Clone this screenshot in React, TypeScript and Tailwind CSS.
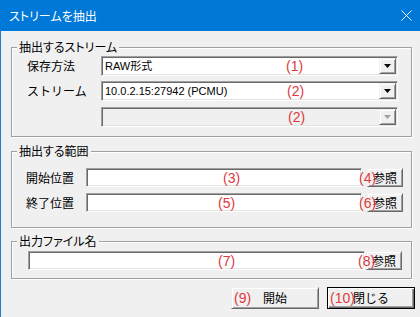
const jp = "font-['Noto_Sans_CJK_JP',sans-serif]";
const red = "absolute top-1/2 -translate-y-1/2 text-[14px] leading-none text-[#dc3a40] font-['Liberation_Sans','Noto_Sans_CJK_JP',sans-serif] whitespace-nowrap pointer-events-none";

const sunken =
  "border border-t-[#a0a0a0] border-l-[#a0a0a0] border-r-white border-b-white shadow-[inset_1px_1px_0_#696969,inset_-1px_-1px_0_#e3e3e3]";
const raised =
  "border border-t-[#f0f0f0] border-l-[#f0f0f0] border-r-[#696969] border-b-[#696969] shadow-[inset_1px_1px_0_#fff,inset_-1px_-1px_0_#a0a0a0] bg-[#f0f0f0]";

function Arrow({ disabled }: { disabled?: boolean }) {
  return (
    <div className={`w-[17px] h-full flex items-center justify-center ${raised}`}>
      <svg width="7" height="4" viewBox="0 0 7 4">
        <path d="M0 0h7L3.5 4z" fill={disabled ? "#a0a0a0" : "#000"} />
      </svg>
    </div>
  );
}

function Combo({ text, tag, tagLeft, disabled }: { text?: string; tag: string; tagLeft: string; disabled?: boolean }) {
  return (
    <div className={`relative flex-1 h-[20px] flex ${sunken} ${disabled ? "bg-[#f0f0f0]" : "bg-white"}`}>
      <div className="flex-1 flex items-center pl-[3px] pt-px text-[11px] text-black font-['Liberation_Sans','Noto_Sans_CJK_JP',sans-serif] whitespace-nowrap">
        {text}
      </div>
      <div className="p-px">
        <Arrow disabled={disabled} />
      </div>
      <span className={`${red} ${tagLeft}`}>{tag}</span>
    </div>
  );
}

function Field({ tag, tagLeft }: { tag: string; tagLeft: string }) {
  return (
    <div className={`relative flex-1 h-[19px] bg-white ${sunken}`}>
      <span className={`${red} ${tagLeft}`}>{tag}</span>
    </div>
  );
}

function RefButton({ tag }: { tag: string }) {
  return (
    <div className={`relative w-[36px] h-[19px] flex items-center justify-center text-[12px] text-black ${raised}`}>
      参照
      <span className={`${red} left-[-9px]`}>{tag}</span>
    </div>
  );
}

function Group({ label, className, children }: { label: string; className: string; children: React.ReactNode }) {
  return (
    <div className={`relative ml-[10px] w-[401px] border border-[#a0a0a0] shadow-[inset_1px_1px_0_#fff,1px_1px_0_#fff] ${className}`}>
      <span className="absolute -top-[10px] left-[5px] px-[2px] bg-[#f0f0f0] text-[12px] leading-[18px] text-black [font-feature-settings:'palt']">
        {label}
      </span>
      {children}
    </div>
  );
}

export default function App() {
  return (
    <div className={`w-[420px] h-[317px] overflow-hidden bg-[#f0f0f0] flex flex-col ${jp}`}>
      <div className="h-[31px] shrink-0 bg-[#0078d7] flex items-center justify-between pl-[9px] pr-[8px]">
        <span className="text-[12px] text-white [font-feature-settings:'palt']">ストリームを抽出</span>
        <svg width="11" height="11" viewBox="0 0 11 11">
          <path d="M0.5 0.5l10 10M10.5 0.5l-10 10" stroke="#fff" strokeWidth="1" />
        </svg>
      </div>

      <div className="flex-1 flex flex-col border-l border-[#1c7bd4]">
        <Group label="抽出するストリーム" className="mt-[16px] pt-[8px] pb-[9px] pl-[15px] pr-[13px] flex flex-col gap-[5px]">
          <div className="flex items-center text-[12px] text-black">
            <span className="w-[74px]">保存方法</span>
            <Combo text="RAW形式" tag="(1)" tagLeft="left-[184px]" />
          </div>
          <div className="flex items-center text-[12px] text-black">
            <span className="w-[74px]">ストリーム</span>
            <Combo text="10.0.2.15:27942 (PCMU)" tag="(2)" tagLeft="left-[185px]" />
          </div>
          <div className="flex items-center pl-[74px] pt-px">
            <Combo disabled tag="(2)" tagLeft="left-[186px]" />
          </div>
        </Group>

        <Group label="抽出する範囲" className="mt-[14px] pt-[16px] pb-[15px] pl-[14px] pr-[8px] flex flex-col gap-[6px]">
          <div className="flex items-center gap-[5px] text-[12px] text-black">
            <span className="w-[55px]">開始位置</span>
            <Field tag="(3)" tagLeft="left-[136px]" />
            <RefButton tag="(4)" />
          </div>
          <div className="flex items-center gap-[5px] text-[12px] text-black">
            <span className="w-[55px]">終了位置</span>
            <Field tag="(5)" tagLeft="left-[131px]" />
            <RefButton tag="(6)" />
          </div>
        </Group>

        <Group label="出力ファイル名" className="mt-[13px] pt-[9px] pb-[8px] pl-[16px] pr-[9px] flex items-center gap-[1px]">
          <Field tag="(7)" tagLeft="left-[189px]" />
          <RefButton tag="(8)" />
        </Group>

        <div className="mt-[8px] pr-[5px] flex justify-end gap-[8px] text-[12px] text-black">
          <div className={`relative w-[88px] h-[22px] flex items-center justify-center ${raised}`}>
            開始
            <span className={`${red} left-[2px]`}>(9)</span>
          </div>
          <div className="relative w-[88px] h-[22px] flex items-center justify-center bg-[#f0f0f0] border border-black shadow-[inset_1px_1px_0_#fff,inset_-1px_-1px_0_#696969,inset_-2px_-2px_0_#a0a0a0]">
            閉じる
            <span className={`${red} left-[2px]`}>(10)</span>
          </div>
        </div>
      </div>
    </div>
  );
}
